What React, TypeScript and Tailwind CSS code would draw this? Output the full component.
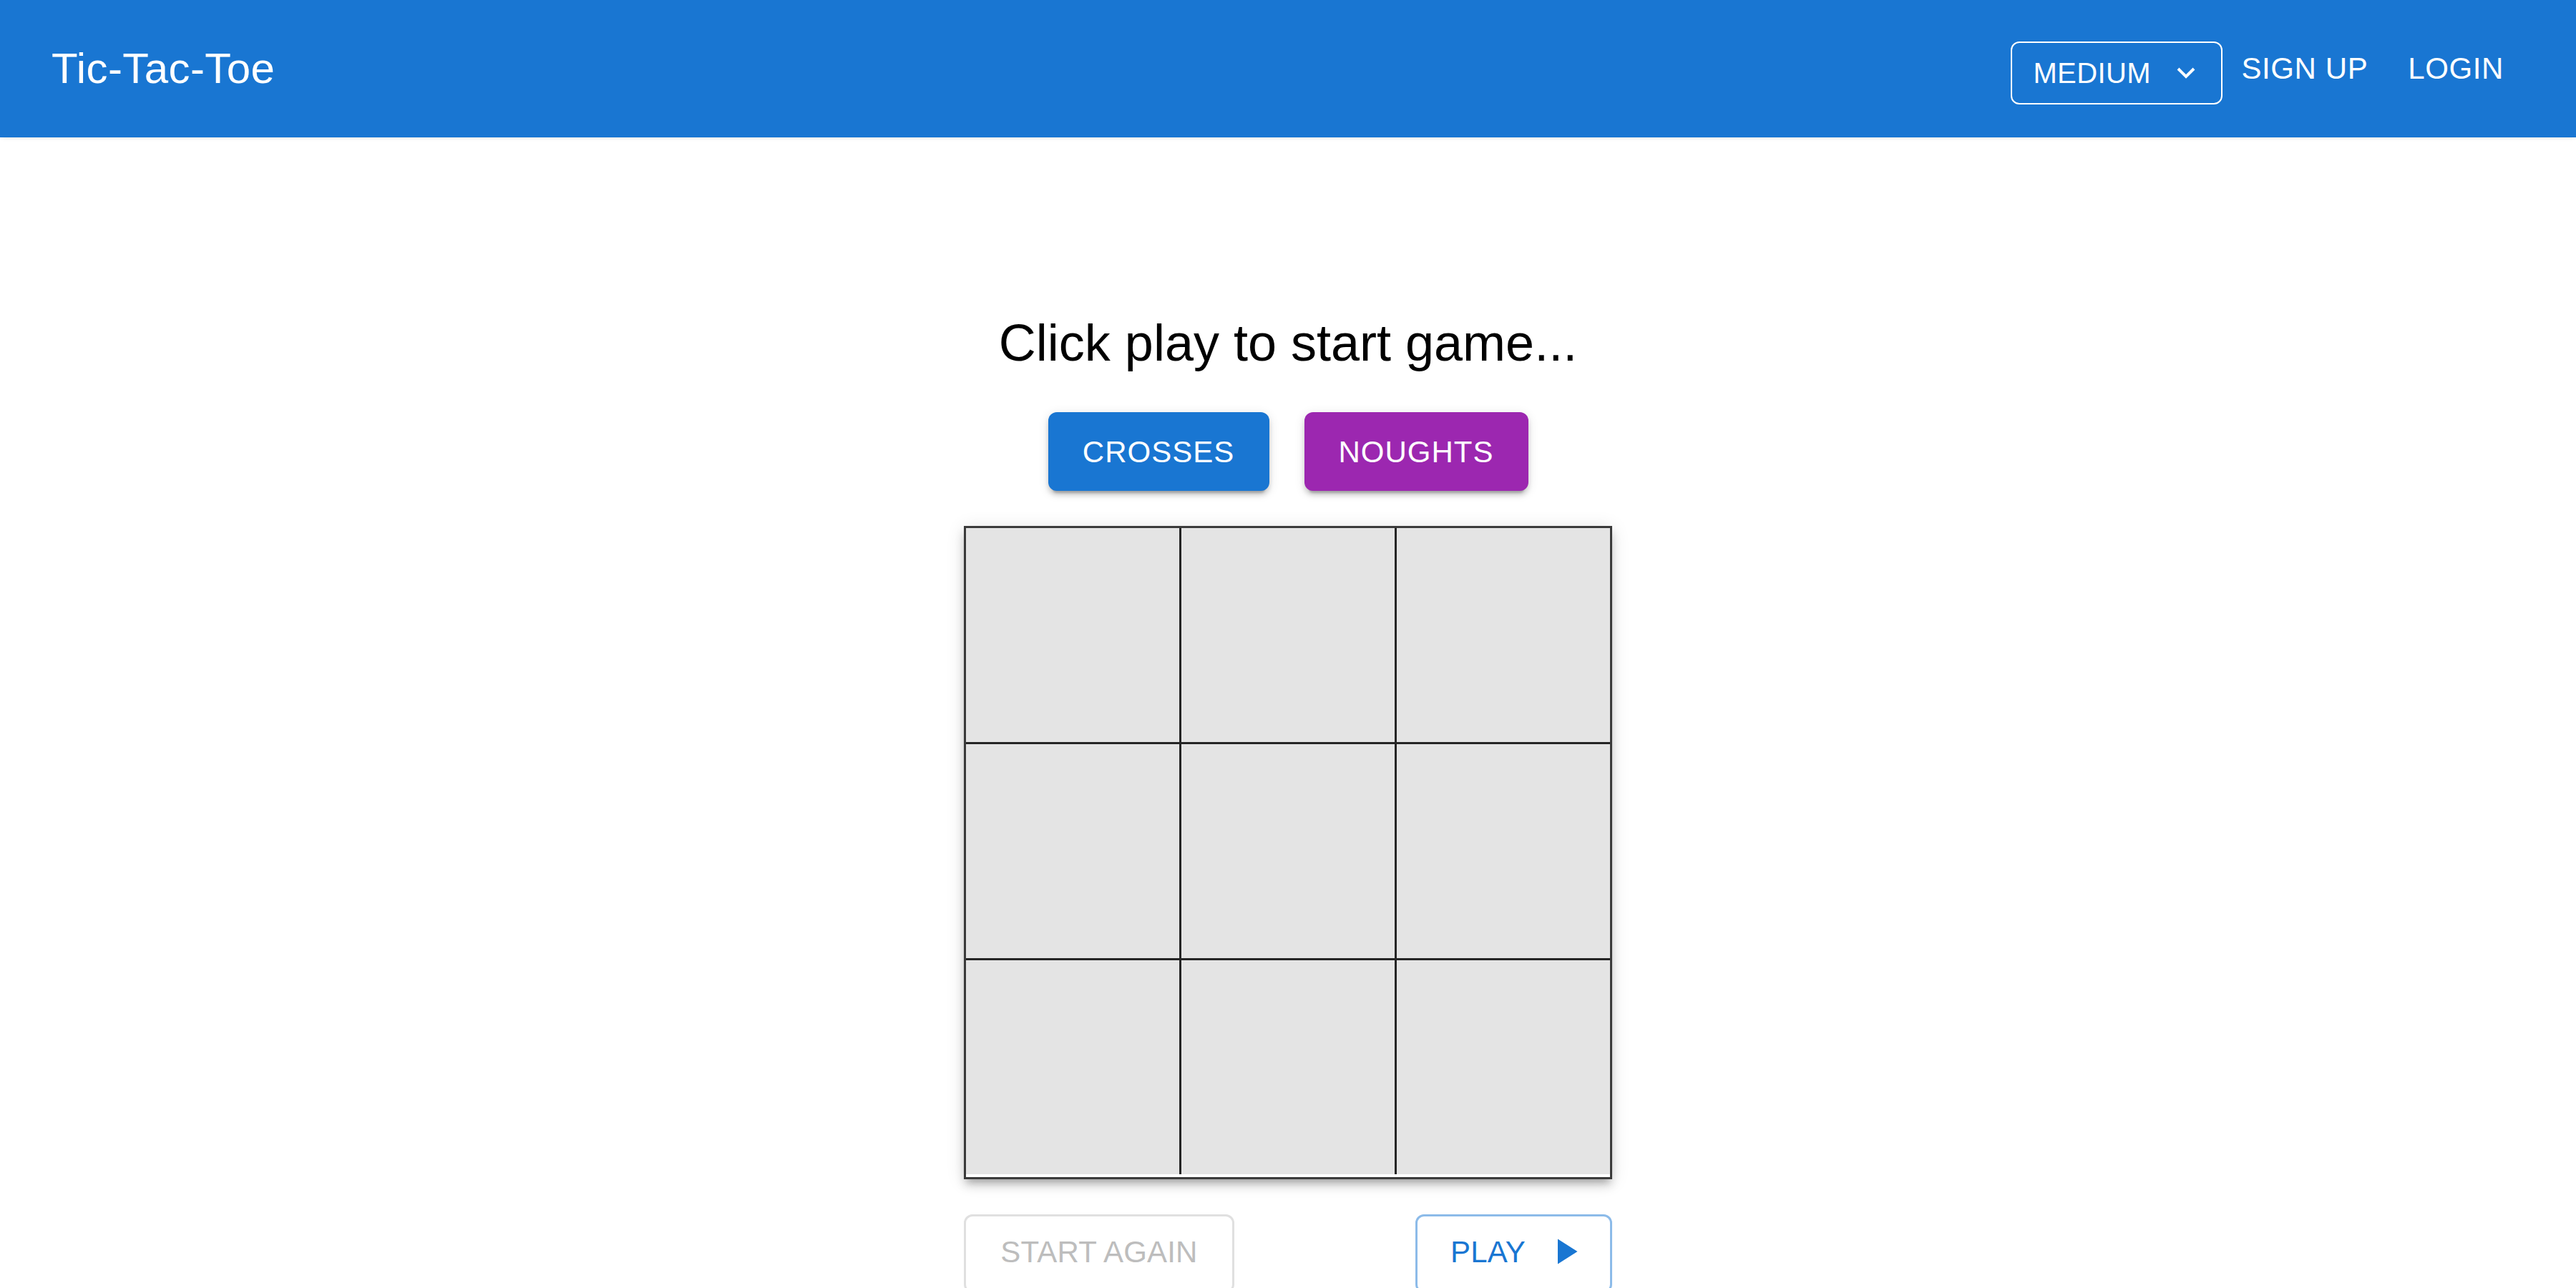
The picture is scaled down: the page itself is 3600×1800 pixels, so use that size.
import React from "react";

const cells = [0, 1, 2, 3, 4, 5, 6, 7, 8];

export default function App() {
  return (
    <div className="h-[1800px] overflow-hidden bg-white font-['Liberation_Sans',Arial,sans-serif]">
      <header className="flex h-[192px] items-center bg-[#1976d2] pl-[72px] pr-[77px] text-white shadow-[0_3px_6px_-3px_rgba(0,0,0,0.15)]">
        <h1 className="flex-1 text-[60px] leading-none tracking-[0.4px]">Tic-Tac-Toe</h1>
        <div className="flex items-center">
          <div className="mt-[12px] flex h-[88px] w-[296px] items-center rounded-[12px] border-2 border-white pl-[29px] pr-[36px]">
            <span className="flex-1 text-[40px] leading-none tracking-[0.4px]">MEDIUM</span>
            <svg width="26" height="17" viewBox="0 0 26 17" fill="none">
              <polyline points="2,2 13,13 24,2" stroke="white" strokeWidth="4" />
            </svg>
          </div>
          <button className="ml-[2px] px-[24px] text-[42px] leading-none tracking-[0.6px]">SIGN UP</button>
          <button className="ml-[8px] px-[24px] text-[42px] leading-none tracking-[0.6px]">LOGIN</button>
        </div>
      </header>

      <main className="flex flex-col items-center pt-[245px]">
        <p className="text-[72px] leading-[84px] text-black">Click play to start game...</p>

        <div className="mt-[55px] flex gap-[49px]">
          <button className="flex h-[110px] w-[309px] items-center justify-center rounded-[12px] bg-[#1976d2] text-[42px] tracking-[1px] text-white shadow-[0_9px_3px_-6px_rgba(0,0,0,0.2),0_6px_6px_0_rgba(0,0,0,0.14),0_3px_15px_0_rgba(0,0,0,0.12)]">
            CROSSES
          </button>
          <button className="flex h-[110px] w-[313px] items-center justify-center rounded-[12px] bg-[#9c27b0] text-[42px] tracking-[1px] text-white shadow-[0_9px_3px_-6px_rgba(0,0,0,0.2),0_6px_6px_0_rgba(0,0,0,0.14),0_3px_15px_0_rgba(0,0,0,0.12)]">
            NOUGHTS
          </button>
        </div>

        <div className="mt-[49px] border-[3px] border-[#3a3a3a] bg-white shadow-[0_9px_9px_-6px_rgba(0,0,0,0.2),0_9px_12px_0_rgba(0,0,0,0.14),0_3px_24px_0_rgba(0,0,0,0.12)]">
          <div className="grid grid-cols-[298px_298px_298px] gap-[3px] bg-[#252525]">
            {cells.map((c) => (
              <div key={c} className="h-[299px] bg-[#e4e4e4]" />
            ))}
          </div>
          <div className="h-[4px] bg-white" />
        </div>

        <div className="mt-[49px] flex w-[906px] justify-between">
          <button className="flex h-[110px] w-[378px] items-center justify-center rounded-[12px] border-[3px] border-[#e0e0e0] pb-[6px] text-[42px] tracking-[0.2px] text-[#bdbdbd]">
            START AGAIN
          </button>
          <button className="flex h-[110px] w-[275px] items-center rounded-[12px] border-[3px] border-[#8cbbe9] pb-[6px] pl-[46px] text-[42px] tracking-[0.2px] text-[#1976d2]">
            PLAY
            <svg className="ml-[25px]" width="60" height="60" viewBox="0 0 24 24" fill="#1976d2">
              <path d="M8 5v14l11-7z" />
            </svg>
          </button>
        </div>
      </main>
    </div>
  );
}
